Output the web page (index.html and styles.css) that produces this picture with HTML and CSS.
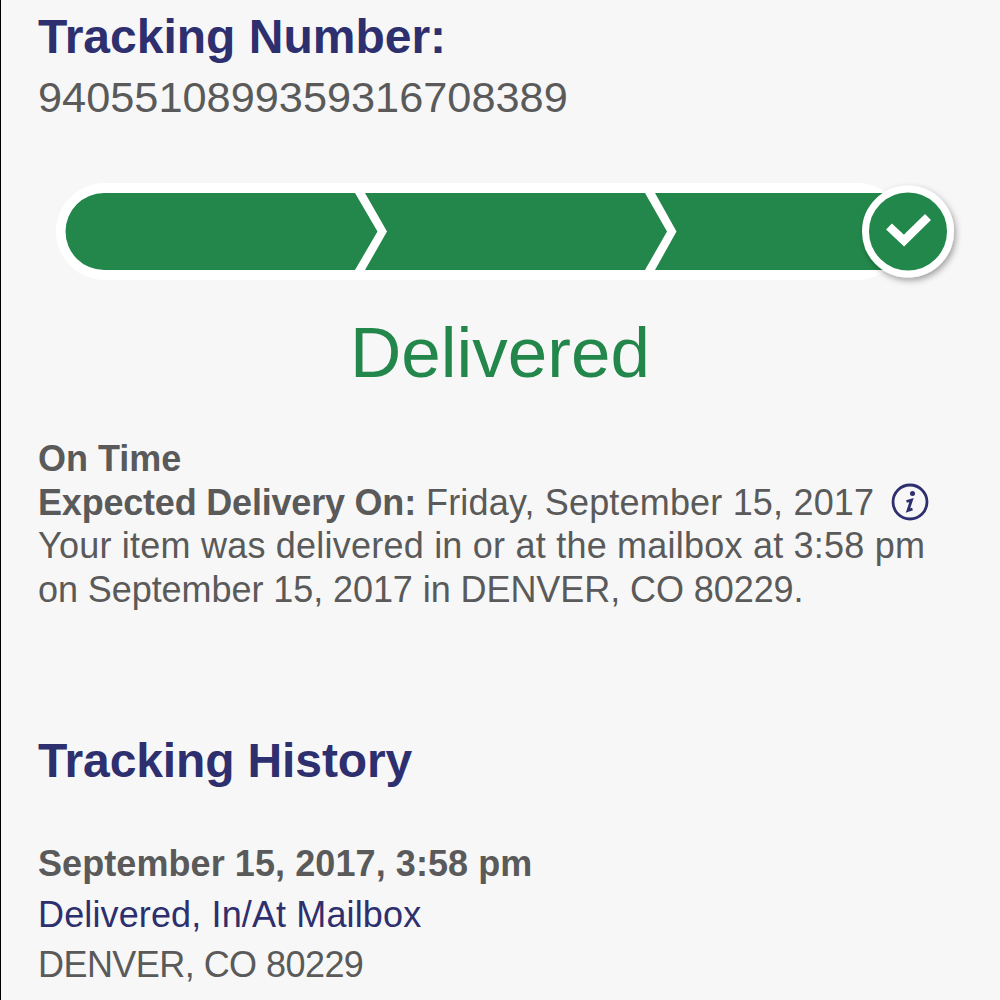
FILE: index.html
```html
<!DOCTYPE html>
<html lang="en">
<head>
    <meta charset="UTF-8">
    <title>Tracking</title>
    <link rel="stylesheet" href="styles.css">
</head>
<body>
    <div class="page">
        <h2 class="title first">Tracking Number:</h2>
        <div class="number">9405510899359316708389</div>

        <svg class="tracker" width="930" height="110" viewBox="0 0 930 110">
            <defs>
                <filter id="shadow" x="-20%" y="-20%" width="150%" height="150%">
                    <feDropShadow dx="2" dy="3" stdDeviation="3" flood-color="#000" flood-opacity="0.35"/>
                </filter>
            </defs>
            <rect x="18" y="6" width="850" height="97" rx="48.500" fill="#fff"/>
            <path d="M66 16H317L339.500 54.500L317 93H66A38.500 38.500 0 0 1 66 16Z" fill="#23874b"/>
            <path d="M327 16H607L629 54.500L607 93H327L349 54.500Z" fill="#23874b"/>
            <path d="M617 16H860V93H617L638.500 54.500Z" fill="#23874b"/>
            <circle cx="870" cy="54.500" r="42.500" fill="#23874b" stroke="#fff" stroke-width="7" filter="url(#shadow)"/>
            <path d="M851 49.500L866 63.500L890 40" fill="none" stroke="#fff" stroke-width="8.500"/>
        </svg>

        <div class="status">Delivered</div>

        <div class="details">
            <div><b>On Time</b></div>
            <div class="expected">
                <span><b class="expected-label">Expected Delivery On:</b> <span class="expected-date">Friday, September 15, 2017</span></span>
                <svg class="info" width="38" height="38" viewBox="0 0 38 38">
                    <circle cx="19" cy="19" r="17" fill="none" stroke="#2e2f6e" stroke-width="2.800"/>
                    <circle cx="21.500" cy="10.500" r="2.500" fill="#2e2f6e"/>
                    <path d="M15.500 18.500L20.500 17L17 27.500L21.500 26" fill="none" stroke="#2e2f6e" stroke-width="2.800"/>
                </svg>
            </div>
            <div class="line-wide">Your item was delivered in or at the mailbox at 3:58 pm</div>
            <div class="line-narrow">on September 15, 2017 in DENVER, CO 80229.</div>
        </div>

        <h2 class="title history">Tracking History</h2>

        <div class="event">
            <div class="event-date">September 15, 2017, 3:58 pm</div>
            <div class="event-name">Delivered, In/At Mailbox</div>
            <div class="event-place">DENVER, CO 80229</div>
        </div>
    </div>
</body>
</html>
```

FILE: styles.css
```css
html, body {
    margin: 0;
    height: 100%;
    overflow: hidden;
}
body {
    font-family: "Liberation Sans", Arial, sans-serif;
    background-color: #f7f7f7;
    color: #5a5a5a;
    border-left: 1px solid #000;
    box-sizing: border-box;
}
.page {
    padding: 10px 0 0 37px;
}
.title {
    margin: 0;
    font-size: 48px;
    line-height: 54px;
    font-weight: bold;
    color: #2e2f6e;
}
.number {
    margin-top: 6px;
    font-size: 43.300px;
    line-height: 54px;
}
.tracker {
    display: block;
    margin: 53px 0 0 0;
}
.status {
    margin-top: 24px;
    margin-left: -1px;
    width: 926px;
    text-align: center;
    font-size: 71px;
    line-height: 84px;
    color: #23874b;
}
.details {
    margin-top: 42px;
    font-size: 36px;
    line-height: 43.500px;
}
.expected {
    display: flex;
    align-items: center;
    gap: 17px;
}
.expected-label {
    letter-spacing: -0.200px;
}
.expected-date {
    letter-spacing: 0.180px;
}
.line-wide {
    letter-spacing: 0.220px;
}
.line-narrow {
    letter-spacing: -0.070px;
}
.info {
    display: block;
}
.history {
    margin-top: 123px;
    letter-spacing: -0.130px;
}
.event {
    margin-top: 51px;
    font-size: 36px;
    line-height: 50.500px;
}
.event-date {
    font-weight: bold;
    letter-spacing: 0.080px;
}
.event-name {
    color: #2e2f6e;
    letter-spacing: 0.130px;
}
.event-place {
    letter-spacing: -0.550px;
}
```
